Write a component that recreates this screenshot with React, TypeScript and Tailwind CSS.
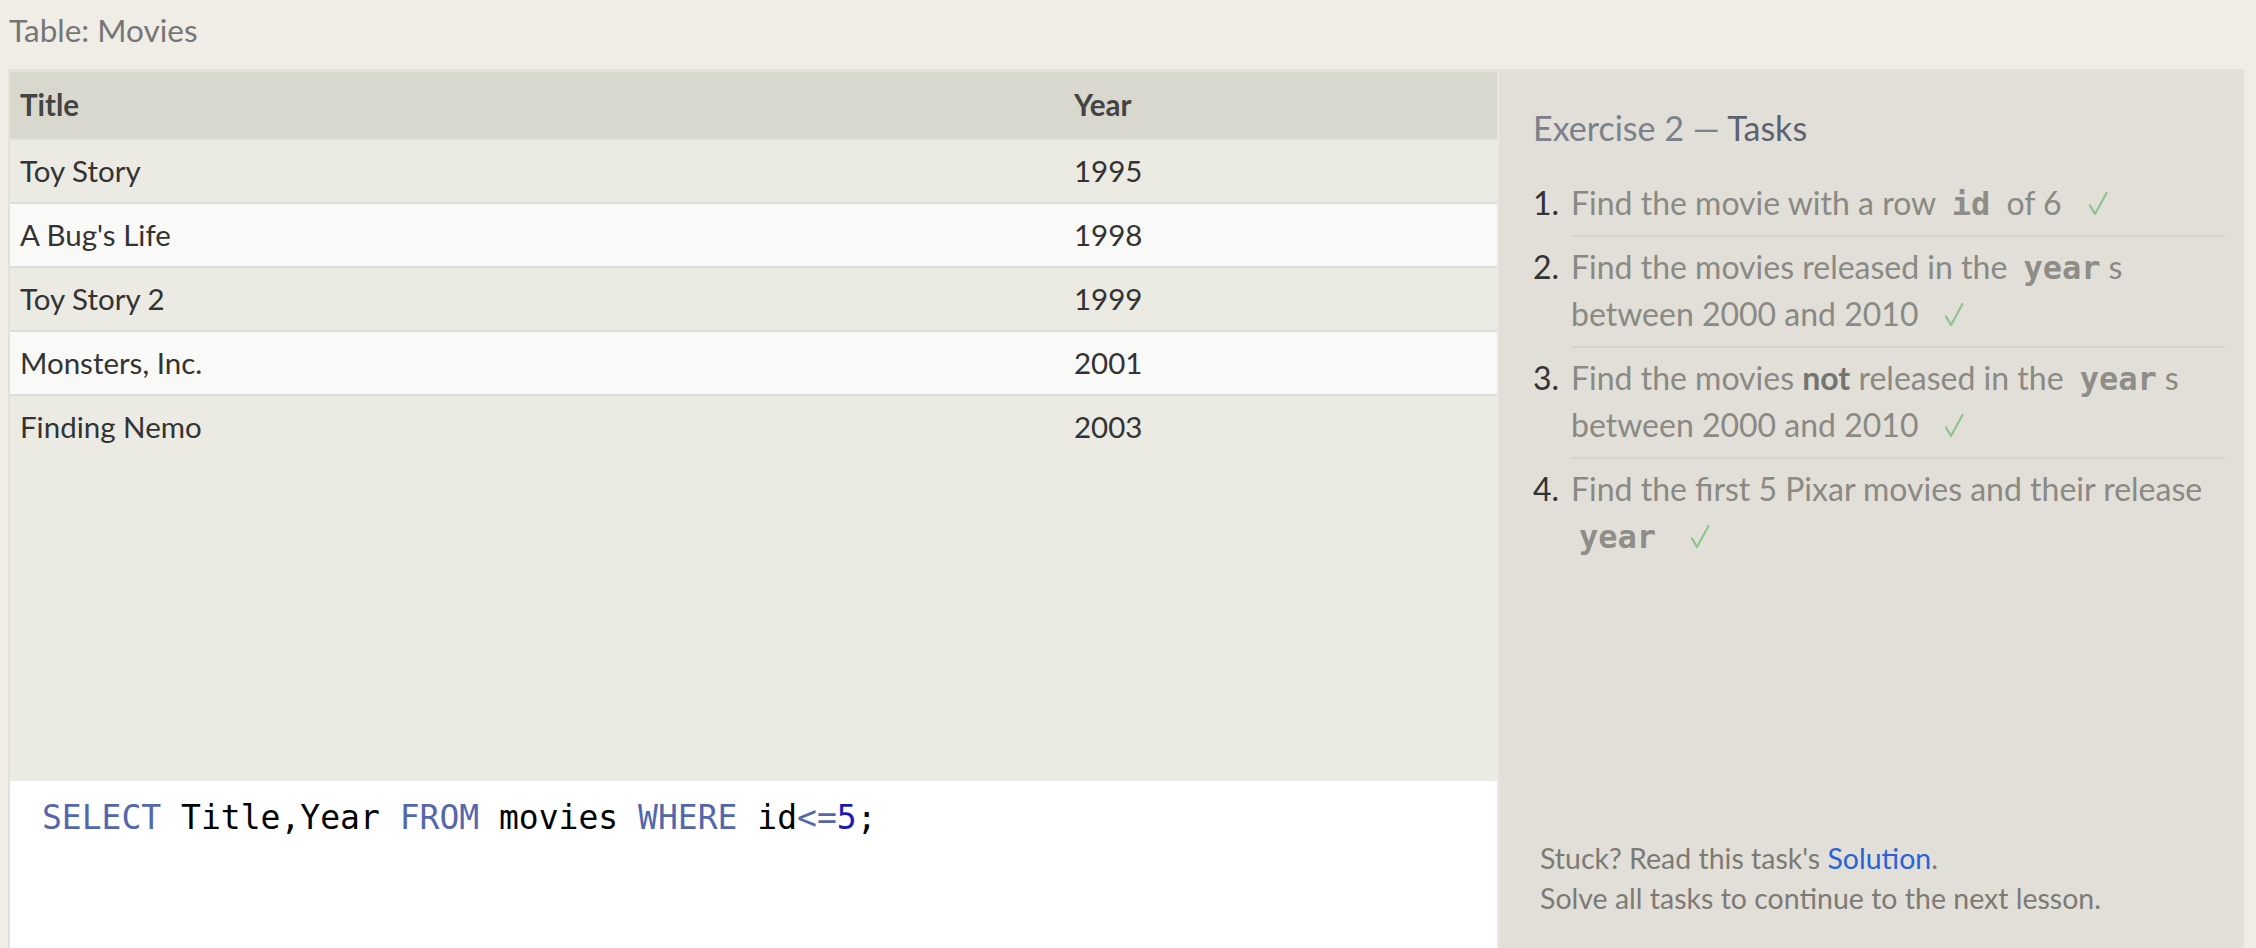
import React from "react";

const rows = [
  { t: "Toy Story", y: "1995" },
  { t: "A Bug's Life", y: "1998" },
  { t: "Toy Story 2", y: "1999" },
  { t: "Monsters, Inc.", y: "2001" },
  { t: "Finding Nemo", y: "2003" },
];

const sans = "font-['Lato','Open_Sans',sans-serif]";

function Code({ children }: { children: React.ReactNode }) {
  return (
    <code className="font-['DejaVu_Sans_Mono','Liberation_Mono',monospace] font-bold text-[32px] leading-none text-[#8e8d88] px-[8px]">
      {children}
    </code>
  );
}

function Check() {
  return (
    <svg
      width="20"
      height="23"
      viewBox="0 0 20 23"
      className="inline-block align-baseline ml-[26px]"
      fill="none"
    >
      <path d="M2 13.5 L7 22 L18.5 1" stroke="#8cc58c" strokeWidth="2.2" strokeLinecap="round" strokeLinejoin="round" />
    </svg>
  );
}

function Task({ n, children, last }: { n: number; children: React.ReactNode; last?: boolean }) {
  return (
    <div className="flex">
      <div className="w-[38px] shrink-0 text-[#333] pt-[6px]">{n}.</div>
      <div className={`flex-1 pt-[6px] pb-[9px] border-b-2 ${last ? "border-transparent" : "border-[#d7d5cb]"}`}>
        {children}
      </div>
    </div>
  );
}

export default function App() {
  return (
    <div className={`h-[948px] w-[2256px] overflow-hidden bg-[#f0ede6] ${sans}`}>
      <div className="h-[69px] pt-[12px] pl-[9px] text-[31.5px] leading-[36px] text-[#767676]">Table: Movies</div>
      <div className="ml-[8px] mr-[12px] border-x-2 border-t-[3px] border-[#e3e1da] flex h-[879px]">
        <div className="w-[1487px] flex flex-col">
          <div className="h-[709px] bg-[#ebeae3] text-[29.5px] text-[#333]">
            <div className="grid grid-cols-[1054px_1fr] h-[68px] bg-[#d9d8cf] border-b-2 border-[#dfdeda] font-bold text-[#444]">
              <div className="pl-[10px] flex items-center">Title</div>
              <div className="pl-[10px] flex items-center">Year</div>
            </div>
            {rows.map((r, i) => (
              <div
                key={r.t}
                className={`grid grid-cols-[1054px_1fr] h-[64px] border-b-2 ${i % 2 === 1 ? "bg-[#f9f9f8]" : "bg-[#ebeae3]"} ${i === rows.length - 1 ? "border-transparent" : "border-[#dddddb]"}`}
              >
                <div className="pl-[10px] flex items-center">{r.t}</div>
                <div className="pl-[10px] flex items-center">{r.y}</div>
              </div>
            ))}
          </div>
          <div className="flex-1 bg-white pl-[32px] pt-[17px] font-['DejaVu_Sans_Mono','Liberation_Mono',monospace] text-[33px] leading-[40px] text-black whitespace-pre">
            <span className="text-[#5467ad]">SELECT</span> Title,Year <span className="text-[#5467ad]">FROM</span> movies{" "}
            <span className="text-[#5467ad]">WHERE</span> id<span className="text-[#5467ad]">&lt;=</span>
            <span className="text-[#1a1ab8]">5</span>;
          </div>
        </div>
        <div className="w-[2px] bg-[#e9e7e0]" />
        <div className="flex-1 bg-[#e1dfd7] pl-[34px] pr-[17px]">
          <div className="pt-[36px] text-[34px] leading-[40px] text-[#7b808d]">
            Exercise 2 — <span className="text-[#5c6270]">Tasks</span>
          </div>
          <div className="mt-[25px] text-[32px] leading-[47px] text-[#8a8984]">
            <Task n={1}>
              Find the movie with a row <Code>id</Code> of 6<Check />
            </Task>
            <Task n={2}>
              Find the movies released in the <Code>year</Code>s
              <br />
              between 2000 and 2010<Check />
            </Task>
            <Task n={3}>
              Find the movies <b className="text-[#757470]">not</b> released in the <Code>year</Code>s
              <br />
              between 2000 and 2010<Check />
            </Task>
            <Task n={4} last>
              Find the first 5 Pixar movies and their release
              <br />
              <Code>year</Code>
              <Check />
            </Task>
          </div>
          <div className="mt-[268px] pl-[7px] text-[28.5px] leading-[40px] text-[#7d7a76]">
            <div>
              Stuck? Read this task's <span className="text-[#2a62d8]">Solution</span>.
            </div>
            <div>Solve all tasks to continue to the next lesson.</div>
          </div>
        </div>
      </div>
    </div>
  );
}
